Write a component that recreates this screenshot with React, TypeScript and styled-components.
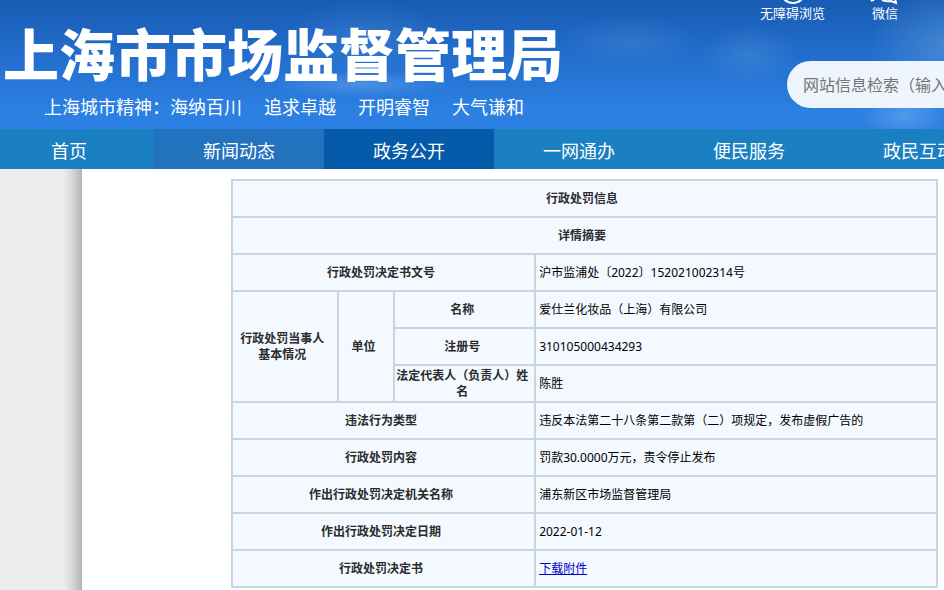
import React from "react";
import styled, { createGlobalStyle } from "styled-components";

const GlobalStyle = createGlobalStyle`
  * { box-sizing: border-box; }
  body {
    margin: 0;
    background: #ffffff;
    font-family: "Noto Sans", "Noto Sans CJK SC", sans-serif;
    color: #000000;
  }
`;

const Page = styled.div`
  display: flex;
  flex-direction: column;
  min-height: 100vh;
  overflow: hidden;
`;

const Banner = styled.header`
  display: flex;
  justify-content: space-between;
  height: 129px;
  color: #ffffff;
  background:
    radial-gradient(ellipse 50px 30px at 750px 55px, rgba(120, 180, 235, 0.22), transparent),
    radial-gradient(ellipse 70px 28px at 630px 42px, rgba(100, 165, 230, 0.22), transparent),
    radial-gradient(ellipse 80px 60px at 950px 45px, rgba(120, 180, 230, 0.4), transparent),
    radial-gradient(ellipse 44px 26px at 905px 115px, rgba(140, 190, 245, 0.4), transparent),
    radial-gradient(ellipse 90px 14px at 360px 84px, rgba(130, 180, 240, 0.4), transparent),
    radial-gradient(ellipse 80px 38px at 365px 38px, rgba(90, 155, 225, 0.28), transparent),
    linear-gradient(#195cb4, #2470d0 50%, #2b80e2 85%, #2c7fe2);
`;

const Brand = styled.div`
  display: flex;
  flex-direction: column;
  flex: none;
  padding: 20px 0 0 3px;
`;

const Title = styled.h1`
  margin: 0;
  font: 900 56px/64px "Noto Sans CJK SC", sans-serif;
  white-space: nowrap;
`;

const Motto = styled.p`
  display: flex;
  margin: 9px 0 0 41px;
  font: 18px/26px "Noto Sans CJK SC", sans-serif;
  white-space: nowrap;
`;

const Virtue = styled.span`
  margin-right: 22px;
`;

const Tools = styled.div`
  display: flex;
  flex-direction: column;
  flex: none;
  width: 184px;
`;

const QuickLinks = styled.div`
  display: flex;
  gap: 44px;
`;

const QuickLink = styled.a`
  display: flex;
  flex-direction: column;
  align-items: center;
  color: #ffffff;
  font-size: 13px;
  line-height: 16px;
  text-decoration: none;
  white-space: nowrap;

  svg {
    display: block;
    width: 32px;
    height: 5px;
  }
`;

const Search = styled.input`
  flex: none;
  width: 320px;
  height: 47px;
  margin: 40px 0 0 27px;
  padding: 0 16px 2px;
  border: 0;
  border-radius: 24px;
  background: rgba(255, 255, 255, 0.92);
  font: 16px "Noto Sans CJK SC", sans-serif;

  &::placeholder {
    color: #757575;
    opacity: 1;
  }
`;

const Nav = styled.nav`
  display: flex;
  height: 40px;
  margin-left: -16px;
  background: #1b80c2;
`;

const NavLink = styled.a<{ $tone?: string }>`
  flex: 0 0 170px;
  height: 40px;
  background: ${(p) => p.$tone ?? "transparent"};
  color: #ffffff;
  font: 18px/42px "Noto Sans CJK SC", sans-serif;
  text-align: center;
  text-decoration: none;
`;

const Main = styled.main`
  display: flex;
  flex: 1;
`;

const Gutter = styled.div`
  flex: none;
  width: 82px;
  background: linear-gradient(to right, #ececec 64px, #dedede 70px, #b4b4b4 82px);
`;

const Content = styled.div`
  flex: 1;
  padding: 10px 6px 2px 149px;
`;

const Table = styled.table`
  width: 100%;
  border-collapse: collapse;
  table-layout: fixed;
  background: #f4f9ff;
  font-size: 12px;
  line-height: 16px;
`;

const PartyCol = styled.col`
  width: 15%;
`;

const KindCol = styled.col`
  width: 8%;
`;

const FieldCol = styled.col`
  width: 20%;
`;

const Row = styled.tr`
  height: 37px;
`;

const Label = styled.th`
  padding: 0 5px 0 0;
  border: 2px solid #c8d5df;
  color: #2b2b2b;
  font-weight: 600;
`;

const Value = styled.td`
  padding: 0 3px;
  border: 2px solid #c8d5df;
`;

const Download = styled.a`
  color: #0000cc;
  text-decoration: underline;
`;

const virtues = ["海纳百川", "追求卓越", "开明睿智", "大气谦和"];

const navItems = [
  { text: "首页" },
  { text: "新闻动态", tone: "#2272bd" },
  { text: "政务公开", tone: "#055ba9" },
  { text: "一网通办" },
  { text: "便民服务" },
  { text: "政民互动" },
];

const details: [string, React.ReactNode][] = [
  ["违法行为类型", "违反本法第二十八条第二款第（二）项规定，发布虚假广告的"],
  ["行政处罚内容", "罚款30.0000万元，责令停止发布"],
  ["作出行政处罚决定机关名称", "浦东新区市场监督管理局"],
  ["作出行政处罚决定日期", "2022-01-12"],
  ["行政处罚决定书", <Download href="#attachment">下载附件</Download>],
];

export default function App() {
  return (
    <Page>
      <GlobalStyle />
      <Banner>
        <Brand>
          <Title>上海市市场监督管理局</Title>
          <Motto>
            <span>上海城市精神：</span>
            {virtues.map((v) => (
              <Virtue key={v}>{v}</Virtue>
            ))}
          </Motto>
        </Brand>
        <Tools>
          <QuickLinks>
            <QuickLink href="#accessible">
              <svg viewBox="0 0 32 5" fill="none" stroke="#fff" strokeWidth="2">
                <circle cx="16" cy="-9" r="12" />
              </svg>
              无障碍浏览
            </QuickLink>
            <QuickLink href="#wechat">
              <svg viewBox="0 0 32 5" fill="none" stroke="#fff" strokeWidth="2">
                <path d="M2 1l4-2M13 0q5 2 9 1l5 2-1-5" />
              </svg>
              微信
            </QuickLink>
          </QuickLinks>
          <Search type="search" aria-label="网站信息检索" placeholder="网站信息检索（输入" />
        </Tools>
      </Banner>
      <Nav>
        {navItems.map((item) => (
          <NavLink key={item.text} href="#nav" $tone={item.tone}>
            {item.text}
          </NavLink>
        ))}
      </Nav>
      <Main>
        <Gutter />
        <Content>
          <Table>
            <colgroup>
              <PartyCol />
              <KindCol />
              <FieldCol />
              <col />
            </colgroup>
            <tbody>
              <Row>
                <Label colSpan={4}>行政处罚信息</Label>
              </Row>
              <Row>
                <Label colSpan={4}>详情摘要</Label>
              </Row>
              <Row>
                <Label colSpan={3}>行政处罚决定书文号</Label>
                <Value>沪市监浦处〔2022〕152021002314号</Value>
              </Row>
              <Row>
                <Label rowSpan={3}>
                  行政处罚当事人
                  <br />
                  基本情况
                </Label>
                <Label rowSpan={3}>单位</Label>
                <Label>名称</Label>
                <Value>爱仕兰化妆品（上海）有限公司</Value>
              </Row>
              <Row>
                <Label>注册号</Label>
                <Value>310105000434293</Value>
              </Row>
              <Row>
                <Label>法定代表人（负责人）姓名</Label>
                <Value>陈胜</Value>
              </Row>
              {details.map(([label, value]) => (
                <Row key={label}>
                  <Label colSpan={3}>{label}</Label>
                  <Value>{value}</Value>
                </Row>
              ))}
            </tbody>
          </Table>
        </Content>
      </Main>
    </Page>
  );
}
